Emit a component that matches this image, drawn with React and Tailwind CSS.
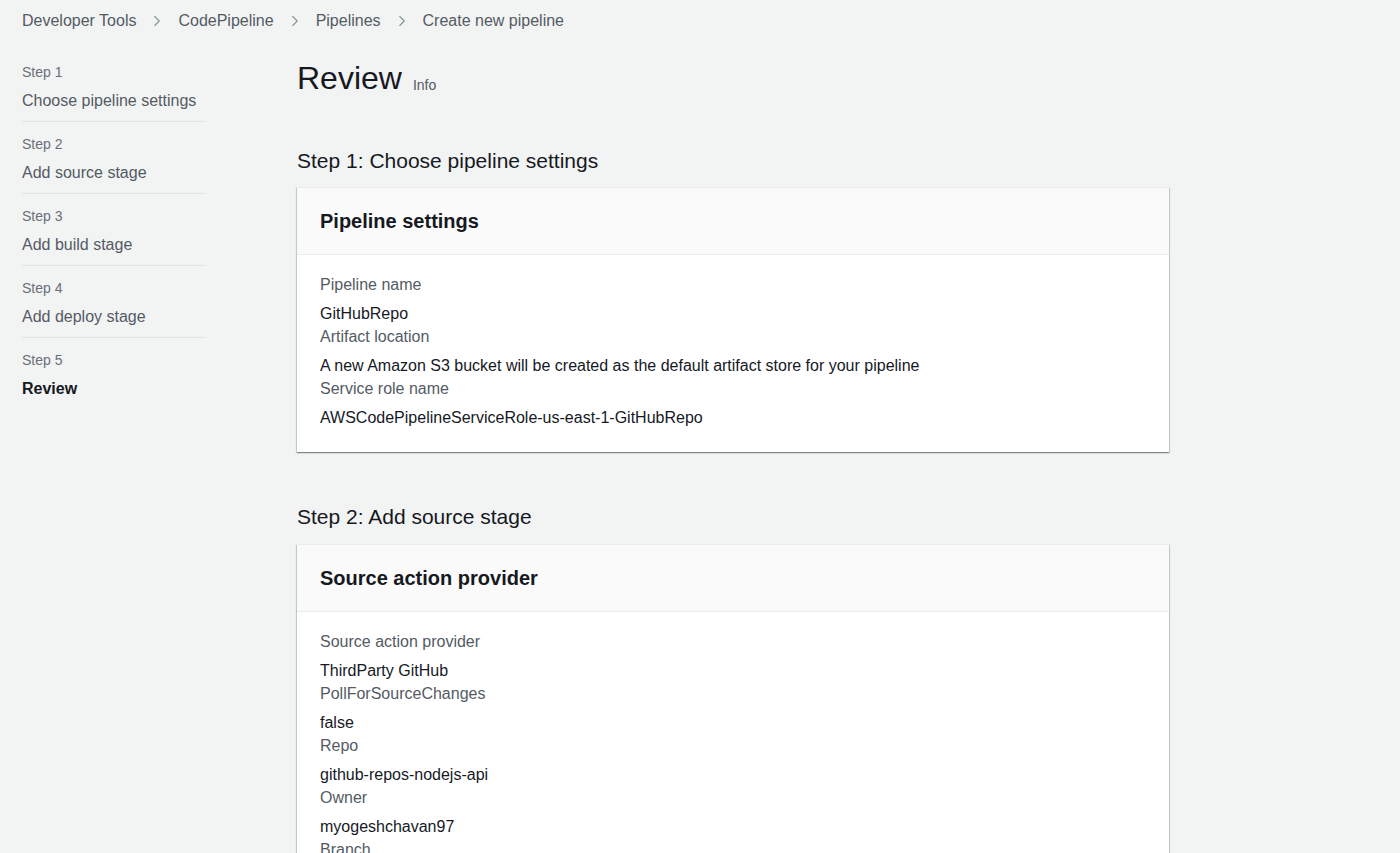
import { ChevronRight } from "lucide-react";

const font = { fontFamily: '"Liberation Sans", Arial, sans-serif' };

const crumbs = ["Developer Tools", "CodePipeline", "Pipelines", "Create new pipeline"];

const steps = [
  { step: "Step 1", title: "Choose pipeline settings" },
  { step: "Step 2", title: "Add source stage" },
  { step: "Step 3", title: "Add build stage" },
  { step: "Step 4", title: "Add deploy stage" },
  { step: "Step 5", title: "Review", active: true },
];

const Field = ({ label, value }) => (
  <div>
    <div className="text-[16px] leading-[22px] text-[#545b64]">{label}</div>
    <div className="mt-[6px] text-[16px] leading-[24px] text-[#16191f]">{value}</div>
  </div>
);

const Card = ({ title, fields }) => (
  <div className="w-[872px] bg-white border-t border-[#eaeded] shadow-[0_1px_1px_0_rgba(0,28,36,0.3),1px_1px_1px_0_rgba(0,28,36,0.15),-1px_1px_1px_0_rgba(0,28,36,0.15)]">
    <div className="h-[67px] flex items-center px-[23px] bg-[#fafafa] border-b border-[#eaeded]">
      <h3 className="text-[20px] font-bold text-[#16191f]">{title}</h3>
    </div>
    <div className="px-[23px] pt-[19px] pb-[22px]">
      {fields.map((f) => (
        <Field key={f.label} {...f} />
      ))}
    </div>
  </div>
);

export default function App() {
  return (
    <div style={font} className="h-[853px] overflow-hidden bg-[#f2f3f3] text-[#16191f]">
      <nav className="flex items-center h-[42px] px-[22px] text-[16px] text-[#545b64]">
        {crumbs.map((c, i) => (
          <div key={c} className="flex items-center">
            {i > 0 && <ChevronRight className="mx-[12px] w-[18px] h-[18px] text-[#879596]" strokeWidth={1.5} />}
            <span>{c}</span>
          </div>
        ))}
      </nav>

      <div className="flex">
        <aside className="w-[205px] pl-[22px] pt-[20px] shrink-0">
          {steps.map((s, i) => (
            <div
              key={s.step}
              className={
                i < steps.length - 1 ? "pb-[9px] mb-[12px] border-b border-[#dfe3e3]" : ""
              }
            >
              <div className="text-[14px] leading-[20px] text-[#687078]">{s.step}</div>
              <div
                className={
                  "mt-[8px] text-[16px] leading-[22px] " +
                  (s.active ? "font-bold text-[#16191f]" : "text-[#545b64]")
                }
              >
                {s.title}
              </div>
            </div>
          ))}
        </aside>

        <main className="ml-[92px] pt-[14px]">
          <div className="flex items-end">
            <h1 className="text-[32px] leading-[44px] text-[#16191f]">Review</h1>
            <span className="ml-[11px] mb-[4px] text-[14px] text-[#545b64]">Info</span>
          </div>

          <h2 className="mt-[47px] text-[21px] leading-[28px] text-[#16191f]">Step 1: Choose pipeline settings</h2>
          <div className="mt-[12px]">
            <Card
              title="Pipeline settings"
              fields={[
                { label: "Pipeline name", value: "GitHubRepo" },
                { label: "Artifact location", value: "A new Amazon S3 bucket will be created as the default artifact store for your pipeline" },
                { label: "Service role name", value: "AWSCodePipelineServiceRole-us-east-1-GitHubRepo" },
              ]}
            />
          </div>

          <h2 className="mt-[51px] text-[21px] leading-[28px] text-[#16191f]">Step 2: Add source stage</h2>
          <div className="mt-[13px]">
            <Card
              title="Source action provider"
              fields={[
                { label: "Source action provider", value: "ThirdParty GitHub" },
                { label: "PollForSourceChanges", value: "false" },
                { label: "Repo", value: "github-repos-nodejs-api" },
                { label: "Owner", value: "myogeshchavan97" },
                { label: "Branch", value: "master" },
              ]}
            />
          </div>
        </main>
      </div>
    </div>
  );
}
